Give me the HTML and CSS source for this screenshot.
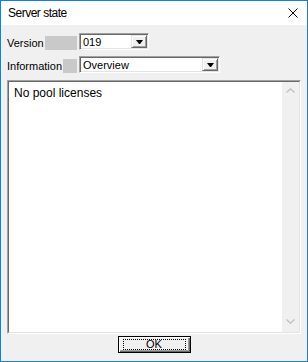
FILE: index.html
```html
<!DOCTYPE html>
<html lang="en">

<head>
    <meta charset="UTF-8">
    <title>Server state</title>
    <link rel="stylesheet" href="styles.css">
</head>

<body>
    <div class="window">
        <!-- title bar -->
        <div class="title_bar">
            <span class="title">Server state</span>
            <svg class="close" width="10" height="10" viewBox="0 0 10 10">
                <path d="M0.5 0.5L9.5 9.5M9.5 0.5L0.5 9.5" stroke="#000" stroke-width="1" fill="none" />
            </svg>
        </div>

        <div class="client">
            <div class="row">
                <div class="label"><span>Version</span></div>
                <div class="combo combo_short">
                    <span class="value">019</span>
                    <div class="drop"><i></i></div>
                </div>
            </div>
            <div class="row">
                <div class="label"><span>Information</span></div>
                <div class="combo combo_long">
                    <span class="value">Overview</span>
                    <div class="drop"><i></i></div>
                </div>
            </div>

            <!-- output box -->
            <div class="edit">
                <div class="edit_inner">
                    <div class="text">No pool licenses</div>
                    <div class="scroll">
                        <div class="scroll_btn">
                            <svg width="9" height="5" viewBox="0 0 9 5">
                                <path d="M0.5 4.5L4.5 0.8L8.5 4.5" stroke="#bfbfbf" stroke-width="1.3" fill="none" />
                            </svg>
                        </div>
                        <div class="scroll_btn">
                            <svg width="9" height="5" viewBox="0 0 9 5">
                                <path d="M0.5 0.5L4.5 4.2L8.5 0.5" stroke="#bfbfbf" stroke-width="1.3" fill="none" />
                            </svg>
                        </div>
                    </div>
                </div>
            </div>

            <div class="buttons">
                <div class="ok"><span>OK</span></div>
            </div>
        </div>
    </div>
</body>

</html>
```

FILE: styles.css
```css
* {
    margin: 0;
    padding: 0;
    box-sizing: border-box;
}
body {
    width: 308px;
    height: 362px;
    overflow: hidden;
    font-family: "Liberation Sans", Arial, sans-serif;
    font-size: 11px;
    color: #000;
}
.window {
    width: 308px;
    height: 362px;
    border: 1px solid #1a7fd4;
    display: flex;
    flex-direction: column;
    background-color: #f0f0f0;
}
.title_bar {
    height: 24px;
    background-color: #fff;
    display: flex;
    align-items: center;
    justify-content: space-between;
    padding: 0 9px 0 7px;
}
.title {
    font-size: 12px;
    letter-spacing: -0.5px;
}
.client {
    flex: 1;
    display: flex;
    flex-direction: column;
    padding: 8px 5px 0 5px;
}
.row {
    display: flex;
    align-items: flex-end;
    height: 17px;
}
.row + .row {
    margin-top: 6px;
}
.label {
    width: 71px;
    height: 14px;
    background-color: #c9c9c9;
}
.label span {
    display: inline-block;
    height: 14px;
    line-height: 14px;
    padding: 0 1px;
    background-color: #f0f0f0;
}
.combo {
    margin-left: 2px;
    height: 17px;
    display: flex;
    background-color: #fff;
    border: 1px solid;
    border-color: #a0a0a0 #fff #fff #a0a0a0;
    box-shadow: inset 1px 1px #696969, inset -1px -1px #e3e3e3;
}
.combo_short {
    width: 70px;
}
.combo_long {
    width: 141px;
}
.value {
    flex: 1;
    padding-left: 3px;
    line-height: 16px;
}
.drop {
    width: 16px;
    height: 13px;
    margin: 1px 1px 0 0;
    background-color: #f0f0f0;
    border: 1px solid;
    border-color: #e3e3e3 #696969 #696969 #e3e3e3;
    box-shadow: inset 1px 1px #fff, inset -1px -1px #a0a0a0;
    display: flex;
    align-items: center;
    justify-content: center;
}
.drop i {
    width: 1px;
    height: 0;
    border-top: 4px solid #000;
    border-left: 3px solid transparent;
    border-right: 3px solid transparent;
    box-sizing: content-box;
}
.edit {
    margin: 7px 0 0 1px;
    width: 294px;
    height: 254px;
    border: 1px solid;
    border-color: #a0a0a0 #fff #fff #a0a0a0;
}
.edit_inner {
    height: 100%;
    display: flex;
    background-color: #fff;
    border: 1px solid;
    border-color: #696969 #e3e3e3 #e3e3e3 #696969;
}
.text {
    flex: 1;
    padding: 4px 0 0 5px;
    font-size: 12px;
    line-height: 15px;
}
.scroll {
    width: 17px;
    background-color: #f0f0f0;
    display: flex;
    flex-direction: column;
    justify-content: space-between;
    padding-bottom: 2px;
}
.scroll_btn {
    height: 17px;
    display: flex;
    align-items: center;
    justify-content: center;
}
.buttons {
    display: flex;
    justify-content: center;
    margin-top: 2px;
}
.ok {
    width: 73px;
    height: 17px;
    border: 1px solid #000;
    background-color: #f0f0f0;
    box-shadow: inset 1px 1px #fff, inset -1px -1px #696969, inset -2px -2px #a0a0a0;
    display: flex;
    align-items: center;
    justify-content: center;
}
.ok span {
    width: 63px;
    height: 11px;
    line-height: 9px;
    border: 1px dotted #000;
    text-align: center;
}
```
